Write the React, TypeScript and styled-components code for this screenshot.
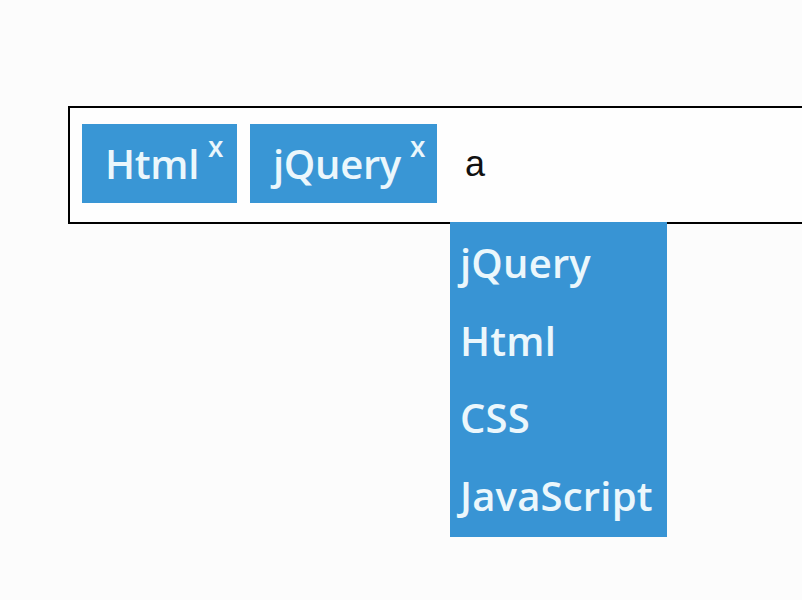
import React from "react";
import styled, { createGlobalStyle } from "styled-components";

const Global = createGlobalStyle`
  html, body {
    margin: 0;
    padding: 0;
    background: #fcfcfc;
    overflow: hidden;
  }
  body {
    font-family: "Open Sans", "Noto Sans", sans-serif;
  }
`;

const Page = styled.div`
  width: 802px;
  height: 600px;
  padding: 106px 0 0 68px;
  box-sizing: border-box;
  overflow: hidden;
`;

const TagBox = styled.div`
  position: relative;
  width: 780px;
  height: 118px;
  box-sizing: border-box;
  border: 2px solid #000;
  background: #fefefe;
  display: flex;
  align-items: flex-start;
  gap: 13px;
  padding: 16px 12px 0 12px;
`;

const Tag = styled.div<{ $w: number }>`
  width: ${(p) => p.$w}px;
  height: 79px;
  box-sizing: border-box;
  background: #3996d5;
  color: #ebf7fc;
  display: flex;
  align-items: flex-start;
  padding: 0 0 0 23px;
  font-size: 40px;
  font-weight: 600;
  line-height: 79px;
  letter-spacing: -0.3px;
  white-space: nowrap;
`;

const Close = styled.span`
  font-size: 28px;
  font-weight: 600;
  line-height: 1;
  margin: 8px 0 0 9px;
  letter-spacing: 0;
`;

const Typed = styled.div`
  font-family: "Liberation Sans", Arial, sans-serif;
  font-size: 36px;
  line-height: 79px;
  color: #111;
  margin-left: 15px;
`;

const Dropdown = styled.ul`
  position: absolute;
  left: 380px;
  top: 100%;
  width: 217px;
  height: 315px;
  margin: 0;
  padding: 2px 0 0 0;
  box-sizing: border-box;
  list-style: none;
  background: #3894d4;
  color: #ebf7fc;
  z-index: 2;
`;

const Option = styled.li`
  font-size: 40px;
  font-weight: 600;
  line-height: 77.5px;
  padding-left: 10px;
  letter-spacing: 0.2px;
  white-space: nowrap;
`;

export default function App() {
  return (
    <>
      <Global />
      <Page>
        <TagBox>
          <Tag $w={155}>
            Html<Close>x</Close>
          </Tag>
          <Tag $w={187}>
            jQuery<Close>x</Close>
          </Tag>
          <Typed>a</Typed>
          <Dropdown>
            <Option>jQuery</Option>
            <Option>Html</Option>
            <Option>CSS</Option>
            <Option>JavaScript</Option>
          </Dropdown>
        </TagBox>
      </Page>
    </>
  );
}
